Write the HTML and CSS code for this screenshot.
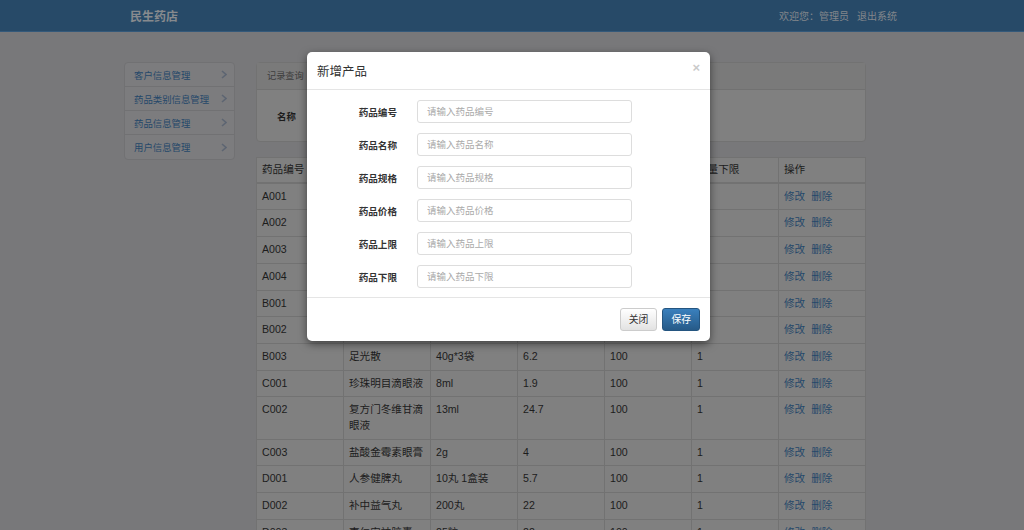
FILE: index.html
```html
<!DOCTYPE html>
<html lang="zh-CN">
<head>
    <meta charset="UTF-8">
    <meta name="viewport" content="width=device-width, initial-scale=1.0">
    <title>民生药店 - 药品信息管理</title>
    <link rel="stylesheet" href="styles.css">
</head>
<body>
<div class="page">
    <div class="topbar">
        <span class="shop-name">民生药店</span>
        <span class="user-info"><span>欢迎您：管理员</span><span class="logout">退出系统</span></span>
    </div>

    <div class="layout">
        <!-- Side menu -->
        <ul class="side-menu">
            <li><span class="menu-link">客户信息管理</span><svg width="6" height="9" viewBox="0 0 6 9"><polyline points="1,1 5,4.5 1,8"/></svg></li>
            <li><span class="menu-link">药品类别信息管理</span><svg width="6" height="9" viewBox="0 0 6 9"><polyline points="1,1 5,4.5 1,8"/></svg></li>
            <li><span class="menu-link">药品信息管理</span><svg width="6" height="9" viewBox="0 0 6 9"><polyline points="1,1 5,4.5 1,8"/></svg></li>
            <li><span class="menu-link">用户信息管理</span><svg width="6" height="9" viewBox="0 0 6 9"><polyline points="1,1 5,4.5 1,8"/></svg></li>
        </ul>

        <div class="content">
            <div class="query-box">
                <div class="query-title">记录查询</div>
                <div class="query-body">
                    <span class="query-label">名称</span>
                </div>
            </div>

            <table class="drug-table">
                <thead>
                    <tr>
                        <th>药品编号</th>
                        <th>药品名称</th>
                        <th>药品规格</th>
                        <th>药品价格</th>
                        <th>数量上限</th>
                        <th>数量下限</th>
                        <th>操作</th>
                    </tr>
                </thead>
                <tbody>
                    <tr><td>A001</td><td>感冒灵颗粒</td><td>10g*9袋</td><td>12.5</td><td>100</td><td>1</td><td><span class="op-link">修改</span> <span class="op-link">删除</span></td></tr>
                    <tr><td>A002</td><td>板蓝根颗粒</td><td>10g*20袋</td><td>9.8</td><td>100</td><td>1</td><td><span class="op-link">修改</span> <span class="op-link">删除</span></td></tr>
                    <tr><td>A003</td><td>连花清瘟胶囊</td><td>24粒</td><td>14.8</td><td>100</td><td>1</td><td><span class="op-link">修改</span> <span class="op-link">删除</span></td></tr>
                    <tr><td>A004</td><td>复方氨酚烷胺片</td><td>12片</td><td>6.5</td><td>100</td><td>1</td><td><span class="op-link">修改</span> <span class="op-link">删除</span></td></tr>
                    <tr><td>B001</td><td>达克宁乳膏</td><td>20g</td><td>15</td><td>100</td><td>1</td><td><span class="op-link">修改</span> <span class="op-link">删除</span></td></tr>
                    <tr><td>B002</td><td>皮炎平软膏</td><td>20g</td><td>8.5</td><td>100</td><td>1</td><td><span class="op-link">修改</span> <span class="op-link">删除</span></td></tr>
                    <tr><td>B003</td><td>足光散</td><td>40g*3袋</td><td>6.2</td><td>100</td><td>1</td><td><span class="op-link">修改</span> <span class="op-link">删除</span></td></tr>
                    <tr><td>C001</td><td>珍珠明目滴眼液</td><td>8ml</td><td>1.9</td><td>100</td><td>1</td><td><span class="op-link">修改</span> <span class="op-link">删除</span></td></tr>
                    <tr><td>C002</td><td>复方门冬维甘滴眼液</td><td>13ml</td><td>24.7</td><td>100</td><td>1</td><td><span class="op-link">修改</span> <span class="op-link">删除</span></td></tr>
                    <tr><td>C003</td><td>盐酸金霉素眼膏</td><td>2g</td><td>4</td><td>100</td><td>1</td><td><span class="op-link">修改</span> <span class="op-link">删除</span></td></tr>
                    <tr><td>D001</td><td>人参健脾丸</td><td>10丸 1盒装</td><td>5.7</td><td>100</td><td>1</td><td><span class="op-link">修改</span> <span class="op-link">删除</span></td></tr>
                    <tr><td>D002</td><td>补中益气丸</td><td>200丸</td><td>22</td><td>100</td><td>1</td><td><span class="op-link">修改</span> <span class="op-link">删除</span></td></tr>
                    <tr><td>D003</td><td>枣仁安神胶囊</td><td>25粒</td><td>22</td><td>100</td><td>1</td><td><span class="op-link">修改</span> <span class="op-link">删除</span></td></tr>
                </tbody>
            </table>
        </div>
    </div>

    <!-- Add product dialog, drawn over the dimmed page -->
    <div class="dialog">
        <div class="dialog-head">
            <span class="dialog-title">新增产品</span>
            <span class="dialog-x">&times;</span>
        </div>
        <div class="dialog-body">
            <div class="field"><span class="field-name">药品编号</span><input type="text" placeholder="请输入药品编号"></div>
            <div class="field"><span class="field-name">药品名称</span><input type="text" placeholder="请输入药品名称"></div>
            <div class="field"><span class="field-name">药品规格</span><input type="text" placeholder="请输入药品规格"></div>
            <div class="field"><span class="field-name">药品价格</span><input type="text" placeholder="请输入药品价格"></div>
            <div class="field"><span class="field-name">药品上限</span><input type="text" placeholder="请输入药品上限"></div>
            <div class="field"><span class="field-name">药品下限</span><input type="text" placeholder="请输入药品下限"></div>
        </div>
        <div class="dialog-foot">
            <span class="action action-close">关闭</span>
            <span class="action action-save">保存</span>
        </div>
    </div>
</div>
</body>
</html>
```

FILE: styles.css
```css
/* the page is drawn as it looks under the dialog's dark backdrop */
* {
    margin: 0;
    padding: 0;
    box-sizing: border-box;
}

.page {
    position: relative;
    height: 530px;
    overflow: hidden;
    background-color: #78787a;
    color: #1c1c1c;
    font-family: "Liberation Sans", "Noto Sans CJK SC", sans-serif;
}

/* Top bar */
.topbar {
    height: 32px;
    background-color: #274a68;
    border-bottom: 1px solid #34597a;
    display: flex;
    align-items: center;
    justify-content: space-between;
    padding: 0 127px 0 130px;
}

.shop-name {
    color: #878a8e;
    font-size: 12px;
    font-weight: bold;
}

.user-info {
    display: flex;
    gap: 8px;
    color: #82868b;
    font-size: 10px;
}

/* Page body */
.layout {
    display: flex;
    align-items: flex-start;
    gap: 21px;
    width: 742px;
    margin: 30px 0 0 124px;
}

.side-menu {
    width: 111px;
    list-style: none;
    background-color: #7c7c7e;
    border: 1px solid #717173;
    border-radius: 4px;
}

.side-menu li {
    height: 24px;
    display: flex;
    align-items: center;
    justify-content: space-between;
    padding: 0 7px 0 9px;
    border-bottom: 1px solid #717173;
    font-size: 9.4px;
}

.side-menu li:last-child {
    border-bottom: none;
}

.menu-link,
.op-link {
    color: #25486a;
}

.side-menu svg polyline {
    fill: none;
    stroke: #5d6572;
    stroke-width: 1.6;
}

.content {
    flex: 1;
}

.query-box {
    background-color: #808080;
    border: 1px solid #727272;
    border-radius: 4px;
    margin-bottom: 15px;
}

.query-title {
    height: 27px;
    line-height: 26px;
    padding-left: 10px;
    background-color: #7a7a7a;
    border-bottom: 1px solid #717171;
    font-size: 9.2px;
    color: #3e3e3e;
}

.query-body {
    height: 51px;
    display: flex;
    align-items: center;
    padding-left: 20px;
}

.query-label {
    font-size: 9.4px;
    font-weight: bold;
}

/* Drug table */
.drug-table {
    width: 100%;
    table-layout: fixed;
    border-collapse: collapse;
    background-color: #808080;
    font-size: 10.6px;
}

.drug-table th,
.drug-table td {
    border: 1px solid #727272;
    padding: 5px;
    line-height: 15.7px;
    text-align: left;
    vertical-align: top;
    font-weight: normal;
}

.drug-table th {
    padding: 4px 5px;
    border-bottom-width: 2px;
}

.op-link + .op-link {
    margin-left: 3px;
}

/* Dialog */
.dialog {
    position: absolute;
    top: 52px;
    left: 307px;
    width: 403px;
    background-color: #fff;
    color: #333;
    border-radius: 5px;
    box-shadow: 0 3px 9px rgba(0, 0, 0, 0.5);
}

.dialog-head {
    height: 38px;
    display: flex;
    align-items: center;
    justify-content: space-between;
    padding: 0 10px;
    border-bottom: 1px solid #e5e5e5;
}

.dialog-title {
    font-size: 12.5px;
}

.dialog-x {
    align-self: flex-start;
    margin-top: 8px;
    font-size: 13px;
    font-weight: bold;
    color: #cacaca;
}

.dialog-body {
    display: flex;
    flex-direction: column;
    gap: 10px;
    padding: 10px 0 9px;
}

.field {
    display: grid;
    grid-template-columns: 90px 215px;
    column-gap: 20px;
    align-items: center;
}

.field-name {
    text-align: right;
    font-size: 9.6px;
    font-weight: bold;
}

.field input {
    height: 23px;
    padding: 0 9px;
    border: 1px solid #ddd;
    border-radius: 3px;
    font-family: inherit;
    font-size: 9.5px;
}

.field input::placeholder {
    color: #aaa;
}

.dialog-foot {
    display: flex;
    justify-content: flex-end;
    gap: 5px;
    padding: 10px;
    border-top: 1px solid #e5e5e5;
}

.action {
    height: 23px;
    line-height: 21px;
    padding: 0 8px;
    border-radius: 3px;
    font-size: 9.8px;
}

.action-close {
    background: linear-gradient(#fff, #e2e2e2);
    border: 1px solid #ccc;
    color: #333;
}

.action-save {
    background: linear-gradient(#3a80bd, #265a88);
    border: 1px solid #245580;
    color: #fff;
}
```
